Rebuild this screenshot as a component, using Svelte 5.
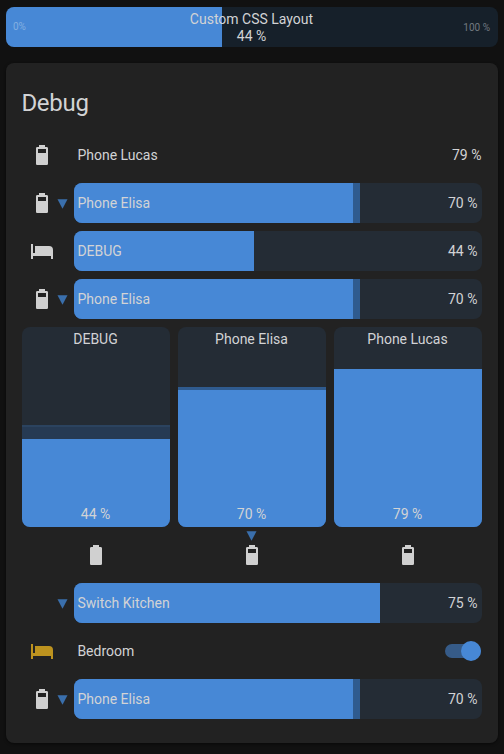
<script>
  const rows = [
    { name: 'Phone Elisa', icon: 'battery', trend: true, fill: 279, zone: 286, value: 70 },
    { name: 'DEBUG', icon: 'bed', trend: false, fill: 180, zone: 180, value: 44 },
    { name: 'Phone Elisa', icon: 'battery', trend: true, fill: 279, zone: 286, value: 70 }
  ];
  const columns = [
    { name: 'DEBUG', icon: 'full', fill: 88, zone: 102, tone: 'faint', value: 44 },
    { name: 'Phone Elisa', icon: 'battery', fill: 137, zone: 140, tone: '', value: 70, trend: true },
    { name: 'Phone Lucas', icon: 'battery', fill: 158, zone: 158, tone: '', value: 79 }
  ];
  const shell = 'M16.67,4H15V2H9V4H7.33A1.33,1.33 0 0,0 6,5.33V20.67C6,21.4 6.6,22 7.33,22H16.67A1.33,1.33 0 0,0 18,20.67V5.33C18,4.6 17.4,4 16.67,4Z';
  const paths = {
    battery: 'M16,10H8V6H16' + shell,
    full: shell,
    bed: 'M19,7H5V14H3V5H1V20H3V17H21V20H23V11A4,4 0 0,0 19,7Z'
  };
</script>

{#snippet glyph(kind)}
  <svg class="glyph" viewBox="0 0 24 24"><path d={paths[kind]} /></svg>
{/snippet}

{#snippet arrow()}
  <svg class="arrow" viewBox="0 0 10 10"><path d="M0 0.2H10L5 9.8Z" /></svg>
{/snippet}

{#snippet barRow(row)}
  <div class="row">
    <div class="lead">
      <div class="slot">{#if row.icon}{@render glyph(row.icon)}{/if}</div>
      <div class="trend">{#if row.trend}{@render arrow()}{/if}</div>
    </div>
    <div class="bar">
      <div class="zone" style="width: {row.zone}px"></div>
      <div class="fill" style="width: {row.fill}px"></div>
      <span>{row.name}</span><span>{row.value} %</span>
    </div>
  </div>
{/snippet}

<main>
  <section class="top">
    <div class="topfill" style="width: 216px"></div>
    <span class="limit">0%</span>
    <div class="toptext"><div>Custom CSS Layout</div><div>44 %</div></div>
    <span class="limit max">100 %</span>
  </section>

  <section class="card">
    <h1>Debug</h1>
    <div class="stack">
      <div class="row">
        <div class="lead"><div class="slot">{@render glyph('battery')}</div></div>
        <div class="plain"><span>Phone Lucas</span><span>79 %</span></div>
      </div>
      {#each rows as row}{@render barRow(row)}{/each}

      <div class="columns">
        {#each columns as col}
          <div class="column">
            <div class="tank">
              <div class="vzone {col.tone}" style="height: {col.zone}px"></div>
              <div class="vfill" style="height: {col.fill}px"></div>
              <span>{col.name}</span><span>{col.value} %</span>
            </div>
            <div class="foot">
              <div class="foottrend">{#if col.trend}{@render arrow()}{/if}</div>
              {@render glyph(col.icon)}
            </div>
          </div>
        {/each}
      </div>

      {@render barRow({ name: 'Switch Kitchen', icon: '', trend: true, fill: 306, zone: 306, value: 75 })}
      <div class="row">
        <div class="lead"><div class="slot lit">{@render glyph('bed')}</div></div>
        <div class="plain"><span>Bedroom</span><div class="switch"><i></i></div></div>
      </div>
      {@render barRow(rows[0])}
    </div>
  </section>
</main>

<style>
  :global(body) { background: #111; }
  main {
    box-sizing: border-box;
    height: 754px;
    padding: 7px 6px 11px;
    display: flex;
    flex-direction: column;
    gap: 16px;
    background: #111;
    color: #d2d3d5;
    font: 14px/20px Roboto, sans-serif;
  }
  span, .toptext { position: relative; white-space: pre; }
  .top {
    position: relative;
    height: 40px;
    flex: none;
    border-radius: 8px;
    overflow: hidden;
    background: #16202a;
    display: flex;
    align-items: center;
    justify-content: space-between;
    padding: 0 8px 0 7px;
  }
  .topfill, .fill, .zone { position: absolute; left: 0; top: 0; bottom: 0; }
  .topfill, .fill, .vfill { background: #4788d6; }
  .toptext {
    position: absolute;
    inset: 4px 1px 0 0;
    text-align: center;
    line-height: 17px;
  }
  .limit { font-size: 10px; line-height: 12px; color: #83afe0; }
  .max { color: #727980; padding-top: 2px; }
  .card {
    box-sizing: border-box;
    height: 680px;
    padding: 0 16px;
    border-radius: 8px;
    background: #222;
    box-shadow: 0 1px 3px #0008;
  }
  h1 {
    margin: 0 0 0 -0.6px;
    height: 72px;
    padding-top: 16px;
    box-sizing: border-box;
    font-size: 24px;
    line-height: 48px;
    font-weight: 400;
    letter-spacing: -0.288px;
  }
  .stack { display: flex; flex-direction: column; gap: 8px; }
  .row { display: flex; height: 40px; }
  .lead { width: 52px; display: flex; align-items: center; }
  .slot { width: 35px; height: 24px; padding-left: 8px; box-sizing: border-box; }
  .trend { height: 10px; flex: none; padding-top: 2px; }
  .glyph { display: block; width: 24px; height: 24px; fill: #d0d0d0; }
  .lit .glyph { fill: #bd931f; }
  .arrow { display: block; width: 11px; height: 10px; fill: #3a6fac; }
  .bar, .plain {
    position: relative;
    flex: 1;
    display: flex;
    align-items: center;
    justify-content: space-between;
  }
  .bar { padding: 0 4.6px 0 3.4px; border-radius: 8px; overflow: hidden; background: #242c35; }
  .plain { padding: 0 0.6px 0 3.4px; }
  .zone, .vzone { background: #2f5b8f; }
  .columns { display: flex; gap: 8px; }
  .column { flex: 1; }
  .tank {
    position: relative;
    height: 200px;
    box-sizing: border-box;
    padding: 2px 1px 3px 0;
    border-radius: 8px;
    overflow: hidden;
    background: #242c35;
    display: flex;
    flex-direction: column;
    align-items: center;
    justify-content: space-between;
  }
  .vzone, .vfill { position: absolute; left: 0; right: 0; bottom: 0; }
  .vzone.faint { box-sizing: border-box; background: #263a53; border-top: 2px solid #2b435f; }
  .foot { display: flex; flex-direction: column; align-items: center; height: 48px; }
  .foottrend { height: 16px; padding: 4px 1px 0 0; box-sizing: border-box; }
  .switch {
    width: 36px;
    height: 14px;
    margin-right: 0.4px;
    border-radius: 7px;
    background: #365b88;
    display: flex;
    align-items: center;
    justify-content: flex-end;
  }
  .switch i { width: 20px; height: 20px; flex: none; border-radius: 50%; background: #4788d6; }
</style>
